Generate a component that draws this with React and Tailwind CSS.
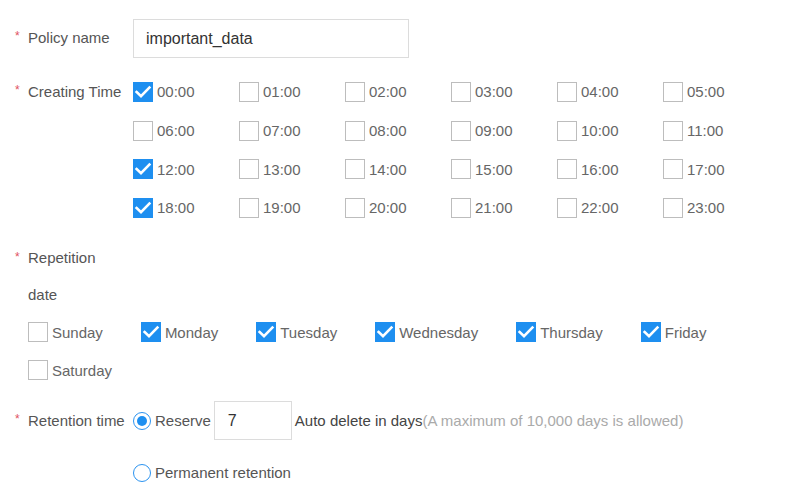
import { useState } from 'react';

const hours = Array.from({ length: 24 }, (_, i) => `${String(i).padStart(2, '0')}:00`);
const days = ['Sunday', 'Monday', 'Tuesday', 'Wednesday', 'Thursday', 'Friday', 'Saturday'];

function Check({ checked, label, onClick, className = '' }) {
  return (
    <button type="button" onClick={onClick} className={`flex items-center gap-[4px] text-left ${className}`}>
      {checked ? (
        <span className="w-[20px] h-[20px] bg-[#1e8ff0] flex items-center justify-center shrink-0">
          <svg width="18" height="18" viewBox="0 0 18 18" fill="none">
            <path d="M2.6 9 L7 13.2 L15.4 4.6" stroke="#fff" strokeWidth="2.6" strokeLinecap="square" />
          </svg>
        </span>
      ) : (
        <span className="w-[20px] h-[20px] border border-[#bdbdbd] bg-white shrink-0" />
      )}
      <span className="text-[15px] text-[#666] pt-[1px]">{label}</span>
    </button>
  );
}

function Radio({ checked, label, onClick }) {
  return (
    <button type="button" onClick={onClick} className="flex items-center gap-[4px]">
      <span className="w-[18px] h-[18px] rounded-full border-[1.5px] border-[#2b93f0] flex items-center justify-center">
        {checked && <span className="w-[10px] h-[10px] rounded-full bg-[#1e8ff0]" />}
      </span>
      <span className="text-[15px] text-[#555] pt-[1px]">{label}</span>
    </button>
  );
}

function Label({ children }) {
  return (
    <div className="w-[118px] shrink-0 flex text-[15px] text-[#555]">
      <span className="w-[13px] text-[#e0525f] text-[12px]">*</span>
      <span>{children}</span>
    </div>
  );
}

export default function App() {
  const [selHours, setSelHours] = useState([0, 12, 18]);
  const [selDays, setSelDays] = useState([1, 2, 3, 4, 5]);
  const [mode, setMode] = useState('reserve');

  const toggle = (list, setList, v) =>
    setList(list.includes(v) ? list.filter((x) => x !== v) : [...list, v]);

  return (
    <div className="bg-white w-[800px] h-[493px] overflow-hidden pl-[15px] pt-[19px] font-['Liberation_Sans',Arial,sans-serif]">
      {/* Policy name */}
      <div className="flex items-center h-[39px]">
        <Label>Policy name</Label>
        <div className="w-[276px] h-[39px] border border-[#dcdcdc] flex items-center px-[12px] text-[16px] text-[#333]">
          important_data
        </div>
      </div>

      {/* Creating time */}
      <div className="flex mt-[14.67px]">
        <div className="h-[38.67px] flex items-center pt-[1px]">
          <Label>Creating Time</Label>
        </div>
        <div className="grid grid-cols-[repeat(6,106px)] auto-rows-[38.67px]">
          {hours.map((h, i) => (
            <Check
              key={h}
              label={h}
              checked={selHours.includes(i)}
              onClick={() => toggle(selHours, setSelHours, i)}
            />
          ))}
        </div>
      </div>

      {/* Repetition date */}
      <div className="mt-[12px] leading-[37px]">
        <Label>Repetition</Label>
        <div className="pl-[13px] text-[15px] text-[#555]">date</div>
      </div>
      <div className="pl-[13px] flex flex-wrap">
        {days.map((d, i) => (
          <div key={d} className="h-[38px] flex items-center mr-[38px]">
            <Check label={d} checked={selDays.includes(i)} onClick={() => toggle(selDays, setSelDays, i)} />
          </div>
        ))}
      </div>

      {/* Retention time */}
      <div className="flex items-center h-[39px] mt-[12px]">
        <Label>Retention time</Label>
        <Radio label="Reserve" checked={mode === 'reserve'} onClick={() => setMode('reserve')} />
        <div className="ml-[3px] w-[78px] h-[39px] border border-[#dcdcdc] flex items-center px-[13px] text-[16px] text-[#333]">
          7
        </div>
        <span className="ml-[3px] text-[15px] text-[#444] pt-[1px]">Auto delete in days</span>
        <span className="text-[15px] text-[#aaa] pt-[1px]">(A maximum of 10,000 days is allowed)</span>
      </div>
      <div className="flex items-center h-[39px] mt-[13px] pl-[118px]">
        <Radio label="Permanent retention" checked={mode === 'permanent'} onClick={() => setMode('permanent')} />
      </div>
    </div>
  );
}
